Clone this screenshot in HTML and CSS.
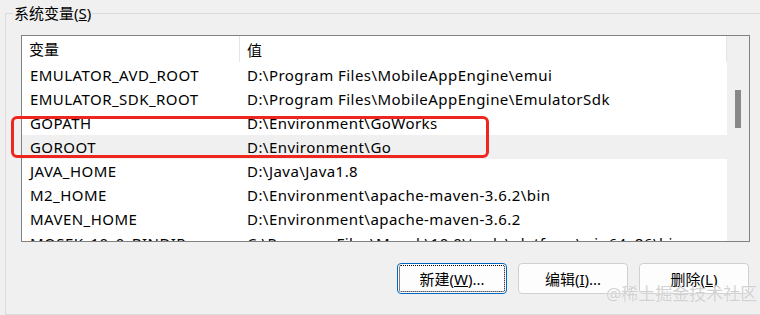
FILE: index.html
```html
<!DOCTYPE html>
<html lang="zh-CN">
<head>
    <meta charset="UTF-8">
    <title>系统变量</title>
    <link rel="stylesheet" href="styles.css">
</head>
<body>
    <fieldset class="group">
        <legend class="legend">系统变量(<u>S</u>)</legend>
        <div class="list">
            <div class="table">
                <div class="head">
                    <div class="cell name">变量</div>
                    <div class="cell value">值</div>
                </div>
                <div class="row"><div class="cell name">EMULATOR_AVD_ROOT</div><div class="cell value">D:\Program Files\MobileAppEngine\emui</div></div>
                <div class="row"><div class="cell name">EMULATOR_SDK_ROOT</div><div class="cell value">D:\Program Files\MobileAppEngine\EmulatorSdk</div></div>
                <div class="row"><div class="cell name">GOPATH</div><div class="cell value">D:\Environment\GoWorks</div></div>
                <div class="row selected"><div class="cell name">GOROOT</div><div class="cell value">D:\Environment\Go</div></div>
                <div class="row"><div class="cell name">JAVA_HOME</div><div class="cell value">D:\Java\Java1.8</div></div>
                <div class="row"><div class="cell name">M2_HOME</div><div class="cell value">D:\Environment\apache-maven-3.6.2\bin</div></div>
                <div class="row"><div class="cell name">MAVEN_HOME</div><div class="cell value">D:\Environment\apache-maven-3.6.2</div></div>
                <div class="row"><div class="cell name">MOSEK_10_0_BINDIR</div><div class="cell value">C:\Program Files\Mosek\10.0\tools\platform\win64x86\bin</div></div>
            </div>
            <div class="scrollbar">
                <div class="thumb"></div>
            </div>
        </div>
        <div class="actions">
            <button type="button" class="btn focused">新建(<u>W</u>)...</button>
            <button type="button" class="btn">编辑(<u>I</u>)...</button>
            <button type="button" class="btn">删除(<u>L</u>)</button>
        </div>
    </fieldset>

    <div class="mark"></div>
    <div class="watermark">@稀土掘金技术社区</div>
</body>
</html>
```

FILE: styles.css
```css
body {
    margin: 0;
    height: 315px;
    overflow: hidden;
    background: #f0f0f0;
    font-family: "Noto Sans", "Noto Sans CJK SC", sans-serif;
    font-size: 15px;
    color: #000;
}
.group {
    box-sizing: border-box;
    width: 800px;
    height: 312px;
    margin: 3px 0 0 5px;
    padding: 0 0 0 15px;
    border: 1px solid #dadada;
}
.legend {
    margin-left: -8px;
    padding: 0 1px;
    line-height: 20px;
}
.list {
    box-sizing: border-box;
    display: flex;
    width: 729px;
    height: 207px;
    margin-top: 12px;
    border: 1px solid #828282;
    background: white;
    overflow: hidden;
}
.table {
    width: 705px;
}
.head,
.row {
    display: flex;
}
.head {
    height: 26px;
    align-items: center;
    border-right: 1px solid #e5e5e5;
    margin-bottom: 1px;
}
.head .name {
    border-right: 1px solid #e5e5e5;
    height: 26px;
    line-height: 26px;
}
.row {
    height: 24px;
    line-height: 24px;
    letter-spacing: 0.45px;
}
.row.selected {
    background: #f0f0f0;
}
.cell {
    white-space: nowrap;
}
.name {
    width: 210px;
    padding-left: 7px;
}
.row .name {
    width: 210px;
    padding-left: 8px;
}
.value {
    padding-left: 7px;
}
.scrollbar {
    width: 22px;
    background: #f0f0f0;
    padding-top: 54px;
}
.thumb {
    width: 6px;
    height: 38px;
    margin-left: 8px;
    background: #888;
}
.actions {
    display: flex;
    justify-content: flex-end;
    gap: 11px;
    width: 728px;
    margin-top: 21px;
}
.btn {
    box-sizing: border-box;
    width: 110px;
    height: 31px;
    border: 1px solid #d0d0d0;
    border-radius: 4px;
    background: #fdfdfd;
    font-family: inherit;
    font-size: 15px;
    color: #000;
    padding: 0;
}
.btn.focused {
    border: 1px solid #0067c0;
    outline: 1px dotted #000;
    outline-offset: -3px;
}
.mark {
    position: absolute;
    left: 11px;
    top: 116px;
    width: 472px;
    height: 36px;
    border: 3px solid #ee2620;
    border-radius: 6px;
}
.watermark {
    position: absolute;
    left: 606px;
    top: 284px;
    font-size: 17px;
    line-height: 20px;
    color: #d2d2d2;
    text-shadow: 0 0 1px #fff;
}
```
